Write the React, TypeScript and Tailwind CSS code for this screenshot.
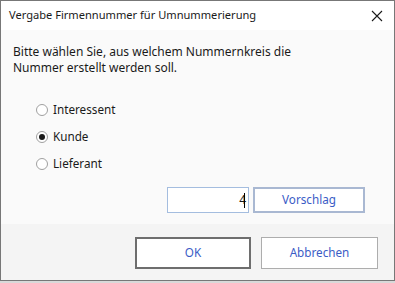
import React from "react";

function Radio({ checked, label }: { checked?: boolean; label: string }) {
  return (
    <div className="flex items-center h-[16px]">
      <div className="w-[12px] h-[12px] rounded-full border border-[#a0a0a0] bg-white flex items-center justify-center">
        {checked && <div className="w-[6px] h-[6px] rounded-full bg-[#1a1a1a]" />}
      </div>
      <span className="ml-[5px] text-[11.7px] text-[#1a1a1a]">{label}</span>
    </div>
  );
}

export default function App() {
  return (
    <div className="w-[395px] h-[283px] bg-[#d9d9d9] overflow-hidden" style={{ fontFamily: '"Noto Sans", "Open Sans", sans-serif' }}>
      <div className="w-[395px] h-[281px] border border-[#777777] flex flex-col bg-white">
        <div className="h-[29px] flex items-center justify-between pl-[8px] pr-[10px] bg-white">
          <span className="text-[11.1px] text-[#1a1a1a]">Vergabe Firmennummer für Umnummerierung</span>
          <svg width="12" height="12" viewBox="0 0 12 12" className="mr-[1px]">
            <path d="M1 1 L11 11 M11 1 L1 11" stroke="#1a1a1a" strokeWidth="1.1" />
          </svg>
        </div>
        <div className="h-[194px] bg-[#fafafa] flex flex-col">
          <div className="pl-[12px] pt-[14px] text-[12px] leading-[16px] text-[#1a1a1a]">
            <div>Bitte wählen Sie, aus welchem Nummernkreis die</div>
            <div>Nummer erstellt werden soll.</div>
          </div>
          <div className="pl-[35px] mt-[26px] flex flex-col gap-[11px]">
            <Radio label="Interessent" />
            <Radio label="Kunde" checked />
            <Radio label="Lieferant" />
          </div>
          <div className="flex mt-[15px] pl-[166px]">
            <div className="w-[82px] h-[26px] border border-[#a4bddf] bg-white flex items-center justify-end pr-[3px] text-[12px] text-[#1a1a1a]">
              4<span className="w-[1px] h-[15px] bg-black -ml-[2px]" />
            </div>
            <div className="ml-[4px] w-[112px] h-[26px] border-2 border-[#a9b8d2] bg-white flex items-center justify-center text-[11.7px] text-[#3a5cc6]">
              Vorschlag
            </div>
          </div>
        </div>
        <div className="flex-1 bg-[#f4f4f4] flex pl-[134px] pt-[13px] gap-[10px]">
          <div className="w-[116px] h-[32px] border-2 border-[#6e6e6e] bg-white flex items-center justify-center text-[11.7px] text-[#3a5cc6]">
            OK
          </div>
          <div className="w-[117px] h-[32px] border border-[#adadad] bg-white flex items-center justify-center text-[11.7px] text-[#3a5cc6]">
            Abbrechen
          </div>
        </div>
      </div>
    </div>
  );
}
